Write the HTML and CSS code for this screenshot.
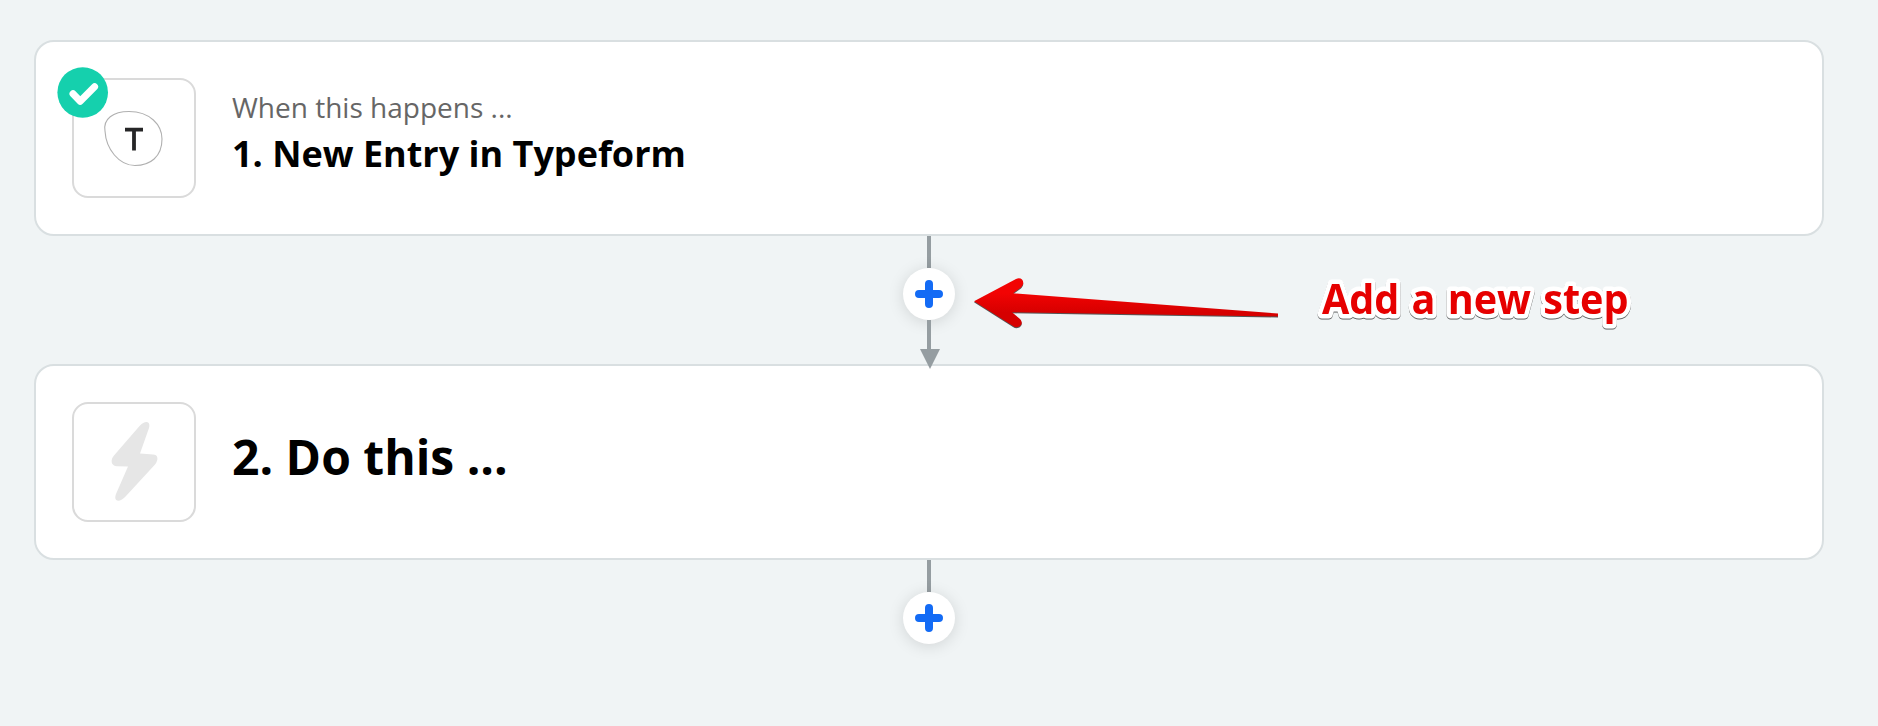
FILE: index.html
```html
<!DOCTYPE html>
<html lang="en">
<head>
<meta charset="utf-8">
<title>Zap editor</title>
<link rel="stylesheet" href="styles.css">
</head>
<body>
<main class="flow">
  <section class="card">
    <div class="app-icon">
      <svg class="app-glyph" viewBox="0 0 120 116" aria-hidden="true">
        <path d="M31 51C29 39 39 31.5 55 31.5C76 31.5 88 45 88 59C88 77 76 85.5 61 85.5C45 85.5 32 69 31 51Z" fill="none" stroke="#b0b0b0" stroke-width="1.1"/>
        <path d="M51 49.7H69M60 49.7V70.5" fill="none" stroke="#262627" stroke-width="3.8"/>
      </svg>
      <svg class="status" viewBox="0 0 52 52" aria-hidden="true">
        <circle cx="25.7" cy="25.5" r="25.3" fill="#15d0ad"/>
        <path d="M16 26.8L23.2 34.2L37.6 19.8" fill="none" stroke="#fff" stroke-width="7" stroke-linecap="round" stroke-linejoin="round"/>
      </svg>
    </div>
    <div class="copy">
      <p class="eyebrow">When this happens ...</p>
      <h2 class="title">1. New Entry in Typeform</h2>
    </div>
  </section>

  <div class="connector">
    <span class="line"></span>
    <button class="add" aria-label="Add step"><svg viewBox="0 0 28 28"><path d="M4 14H24M14 4V24"/></svg></button>
    <span class="line line-lower"></span>
    <svg class="arrowhead" viewBox="0 0 20 20" aria-hidden="true"><path d="M0 0H20L10 20Z"/></svg>
  </div>

  <section class="card">
    <div class="app-icon">
      <svg class="app-glyph" viewBox="0 0 120 116" aria-hidden="true">
        <path d="M66 21.5C71 16 77 17 75 24L66 49.5L79 50.5C84 50.5 85 55.5 81 60.5L52 92C46 99 39 98 42 90L54 62.5L43 62.3C37 62 36 56 40 51.5Z" fill="#e6e6e6"/>
      </svg>
    </div>
    <div class="copy">
      <h2 class="title title-large">2. Do this ...</h2>
    </div>
  </section>

  <div class="connector">
    <span class="line"></span>
    <button class="add" aria-label="Add step"><svg viewBox="0 0 28 28"><path d="M4 14H24M14 4V24"/></svg></button>
  </div>
</main>

<svg class="annotation" viewBox="0 0 680 80">
  <defs>
    <linearGradient id="red" x1="0" y1="0" x2="0" y2="1">
      <stop offset="0.3" stop-color="#f20303"/>
      <stop offset="0.7" stop-color="#d60000"/>
    </linearGradient>
  </defs>
  <path class="pointer" fill="url(#red)" d="M14 41.2L56 19C62 16 66 23 61 27.5L53 33.3L318 53.5V56.5L52 52.3L60 59C65 64.5 58 69.5 53 66Z"/>
  <text class="note" x="362" y="53.7" textLength="306.5" lengthAdjust="spacingAndGlyphs">Add a new step</text>
</svg>
</body>
</html>
```
FILE: styles.css
```css
* { box-sizing: border-box; }

body {
  margin: 0;
  height: 726px;
  background: #f0f4f5;
  font-family: "Open Sans", "Noto Sans", sans-serif;
  overflow: hidden;
}

.flow { padding: 40px 54px 0 34px; }

.card {
  display: flex;
  align-items: flex-start;
  gap: 36px;
  height: 196px;
  padding: 36px;
  background: #fff;
  border: 2px solid #d9dfe1;
  border-radius: 20px;
}

.app-icon {
  position: relative;
  flex: none;
  width: 124px;
  height: 120px;
  border: 2px solid #dadada;
  border-radius: 16px;
}

.app-glyph { display: block; width: 120px; height: 116px; }

.status {
  position: absolute;
  left: -17px;
  top: -13px;
  width: 52px;
  height: 52px;
}

.copy { align-self: center; }

.eyebrow {
  margin: 0 0 1px;
  font-size: 28px;
  line-height: 40px;
  color: #666;
}

.title {
  margin: 0;
  padding-bottom: 9px;
  font-size: 36px;
  line-height: 52px;
  font-weight: 700;
  color: #000;
}

.title-large { padding-bottom: 10px; font-size: 48px; line-height: 64px; }

.connector {
  display: flex;
  flex-direction: column;
  align-items: center;
  height: 128px;
}

.line { flex: none; width: 4px; height: 32px; background: #959da1; }
.line-lower { height: 30px; }

.add {
  flex: none;
  display: grid;
  place-items: center;
  width: 52px;
  height: 52px;
  padding: 0;
  border: 0;
  border-radius: 50%;
  background: #fff;
  box-shadow: 0 2px 16px rgba(0, 0, 0, 0.13);
}

.add svg { width: 28px; height: 28px; }
.add path { stroke: #136bf5; stroke-width: 8; stroke-linecap: round; }

.arrowhead {
  position: relative;
  left: 1px;
  top: -1px;
  flex: none;
  width: 20px;
  height: 20px;
  fill: #959da1;
}

.annotation {
  position: absolute;
  left: 960px;
  top: 260px;
  width: 680px;
  height: 80px;
}

.pointer { filter: drop-shadow(0 1px 0.6px rgba(0, 0, 0, 0.65)); }

.note {
  font-family: "Open Sans", sans-serif;
  font-size: 41px;
  font-weight: 700;
  word-spacing: 2px;
  fill: #e60000;
  stroke: #fff;
  stroke-width: 9px;
  stroke-linejoin: round;
  paint-order: stroke;
  filter: drop-shadow(0 1px 0.7px rgba(0, 0, 0, 0.6));
}
```
